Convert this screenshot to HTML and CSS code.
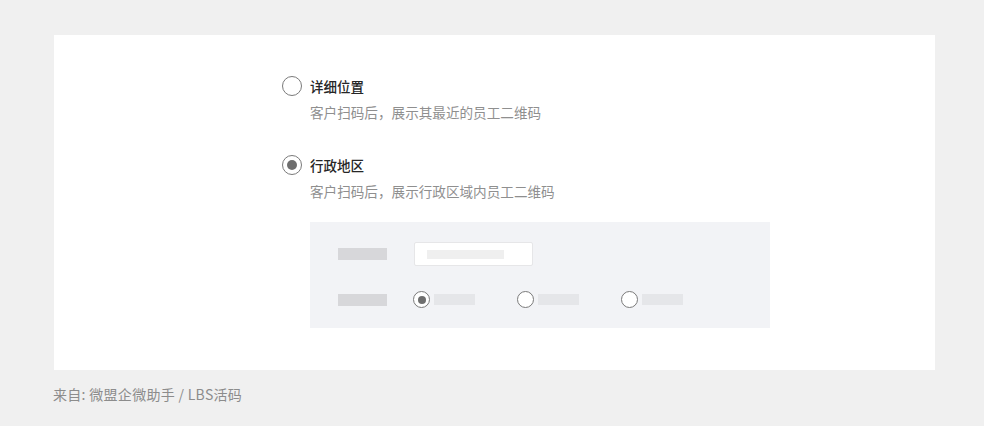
FILE: index.html
```html
<!DOCTYPE html>
<html lang="zh-CN">
<head>
<meta charset="utf-8">
<link rel="stylesheet" href="styles.css">
</head>
<body>
<div class="page">
  <div class="card">
    <div class="option">
      <div class="option-title"><span class="radio"></span><span>详细位置</span></div>
      <div class="option-desc">客户扫码后，展示其最近的员工二维码</div>
    </div>
    <div class="option option-2">
      <div class="option-title"><span class="radio checked"></span><span>行政地区</span></div>
      <div class="option-desc">客户扫码后，展示行政区域内员工二维码</div>
      <div class="panel">
        <div class="panel-row">
          <span class="ph-label"></span>
          <span class="ph-input"><span class="ph-input-bar"></span></span>
        </div>
        <div class="panel-row">
          <span class="ph-label"></span>
          <div class="ph-radios">
            <span class="ph-radio"><span class="mini-radio checked"></span><span class="ph-bar"></span></span>
            <span class="ph-radio"><span class="mini-radio"></span><span class="ph-bar"></span></span>
            <span class="ph-radio"><span class="mini-radio"></span><span class="ph-bar"></span></span>
          </div>
        </div>
      </div>
    </div>
  </div>
  <div class="footer">来自: 微盟企微助手 / LBS活码</div>
</div>
</body>
</html>
```

FILE: styles.css
```css
html, body {
  margin: 0;
  padding: 0;
}
body {
  background: #f0f0f0;
  font-family: "Noto Sans CJK SC", "Noto Sans", sans-serif;
}
.page {
  width: 984px;
  height: 426px;
  padding-top: 35px;
  box-sizing: border-box;
}
.card {
  margin-left: 54px;
  width: 881px;
  height: 335px;
  background: #ffffff;
  box-sizing: border-box;
  padding: 41px 0 0 228px;
}
.option-title {
  display: flex;
  align-items: center;
  height: 20px;
  gap: 8px;
  font-size: 13.5px;
  color: #262626;
  font-weight: 500;
}
.radio {
  width: 20px;
  height: 20px;
  box-sizing: border-box;
  border: 1.3px solid #7a7a7a;
  border-radius: 50%;
  display: flex;
  align-items: center;
  justify-content: center;
  flex: none;
}
.radio.checked::after {
  content: "";
  width: 10px;
  height: 10px;
  border-radius: 50%;
  background: #6e6e6e;
}
.option-desc {
  margin-top: 6px;
  margin-left: 28px;
  height: 20px;
  line-height: 20px;
  font-size: 13.6px;
  color: #8f8f8f;
}
.option-2 {
  margin-top: 33px;
}
.panel {
  margin-top: 21px;
  margin-left: 28px;
  width: 460px;
  height: 106px;
  box-sizing: border-box;
  background: #f2f3f6;
  padding: 20px 0 0 28px;
  display: flex;
  flex-direction: column;
  gap: 25px;
}
.panel-row {
  display: flex;
  align-items: center;
  gap: 27px;
}
.panel-row + .panel-row {
  gap: 26px;
}
.ph-label {
  width: 49px;
  height: 12px;
  background: #d7d7da;
  flex: none;
}
.ph-input {
  width: 119px;
  height: 24px;
  box-sizing: border-box;
  background: #ffffff;
  border: 1px solid #e6e6e8;
  border-radius: 2px;
  display: flex;
  align-items: center;
  padding-left: 12px;
}
.ph-input-bar {
  width: 77px;
  height: 9px;
  background: #efefef;
}
.ph-radios {
  display: flex;
  align-items: center;
  gap: 42px;
}
.ph-radio {
  display: flex;
  align-items: center;
  gap: 4px;
}
.mini-radio {
  width: 17px;
  height: 17px;
  box-sizing: border-box;
  border: 1.2px solid #7a7a7a;
  border-radius: 50%;
  background: #ffffff;
  display: flex;
  align-items: center;
  justify-content: center;
}
.mini-radio.checked::after {
  content: "";
  width: 8px;
  height: 8px;
  border-radius: 50%;
  background: #6e6e6e;
}
.ph-bar {
  width: 41px;
  height: 11px;
  background: #e5e6e9;
}
.footer {
  margin: 14px 0 0 53px;
  font-size: 14px;
  letter-spacing: 0.3px;
  line-height: 20px;
  color: #8c8c8c;
}
```
